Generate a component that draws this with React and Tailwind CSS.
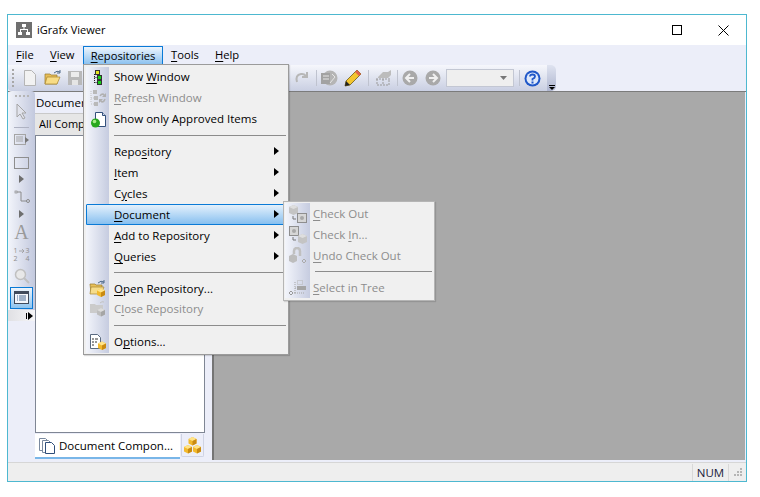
const ui = { fontFamily: '"Open Sans", "Noto Sans", sans-serif' };

const K = ({ children }) => <span className="underline underline-offset-2">{children}</span>;

const Caret = ({ className = '' }) => (
  <svg width="5" height="8" viewBox="0 0 5 8" className={className}><path d="M0 0l5 4-5 4z" fill="currentColor" /></svg>
);

const Cube = ({ x = 0, y = 0, c = '#f2b92c', d = '#c98a12', l = '#ffe48a' }) => (
  <g transform={`translate(${x} ${y})`}>
    <path d="M4 0l4 2v4.500l-4 2-4-2V2z" fill={c} />
    <path d="M4 0l4 2-4 2-4-2z" fill={l} />
    <path d="M8 2v4.500l-4 2V4z" fill={d} />
  </g>
);

const Icons = {
  show: (
    <svg width="16" height="16" viewBox="0 0 16 16">
      <rect x="5.500" y="1.500" width="4" height="4" fill="#e6e620" stroke="#333" strokeWidth="1" />
      <rect x="7.500" y="6.500" width="4" height="4" fill="#18d018" stroke="#333" strokeWidth="1" />
      <rect x="7.500" y="11.500" width="4" height="4" fill="#18d018" stroke="#333" strokeWidth="1" />
      <path d="M4.500 5v9M4.500 8.500h3M4.500 13.500h3" stroke="#222" strokeDasharray="1 1" fill="none" />
    </svg>
  ),
  refresh: (
    <svg width="18" height="16" viewBox="0 0 18 16">
      <g fill="#b9b9b9">
        <rect x="4" y="0" width="4" height="4" /><rect x="5" y="6" width="4" height="4" /><rect x="5" y="12" width="4" height="4" />
      </g>
      <path d="M2 1v12M2 8h3M2 14h3" stroke="#c2c2c2" strokeDasharray="1 1" fill="none" />
      <path d="M11 6q1-2 3-2l2 2M16 9q-1 3-3 3l-2-2" stroke="#b0b0b0" strokeWidth="1.500" fill="none" />
      <path d="M17 3v4h-4zM10 13V9h4z" fill="#b0b0b0" />
    </svg>
  ),
  approved: (
    <svg width="20" height="18" viewBox="0 0 20 18">
      <path d="M7.500 2.500h7l3 3v11h-10z" fill="#fff" stroke="#33507c" />
      <path d="M14.500 2.500v3h3" fill="#d5dcea" stroke="#33507c" />
      <circle cx="7.500" cy="13" r="4.500" fill="#27a81d" />
      <circle cx="6.500" cy="11.500" r="1.800" fill="#a6ee88" />
    </svg>
  ),
  open: (
    <svg width="18" height="18" viewBox="0 0 18 18">
      <path d="M1 4h5l1 1h6v8H2z" fill="#e8c05a" stroke="#99782a" strokeWidth=".7" />
      <path d="M2 7h13l-3 7H1z" fill="#f6dc8a" stroke="#a8852e" strokeWidth=".7" />
      <path d="M9 3q3-3 6-1M15 0v3h-3" stroke="#4e6a8a" fill="none" />
      <Cube x="8" y="8.500" />
    </svg>
  ),
  close: (
    <svg width="18" height="18" viewBox="0 0 18 18">
      <path d="M1 4h5l1 1h7v8H1z" fill="#cbcbcb" />
      <path d="M11 3q2-2 4-1" stroke="#c2c2c2" fill="none" />
      <Cube x="8" y="8" c="#bdbdbd" d="#a5a5a5" l="#dcdcdc" />
    </svg>
  ),
  options: (
    <svg width="18" height="18" viewBox="0 0 18 18">
      <path d="M1.500 1.500h7l3 3v11h-10z" fill="#fff" stroke="#5a6a80" />
      <path d="M3 6h2M3 9h2M3 12h2M6 6h3M6 9h2" stroke="#333" />
      <Cube x="9" y="8.500" />
    </svg>
  ),
  checkOut: (
    <svg width="18" height="18" viewBox="0 0 18 18">
      <path d="M0 2l4.500-2L9 2v6l-4.500 2L0 8z" fill="#c4c4c4" />
      <path d="M0 2l4.500-2L9 2 4.500 4z" fill="#dedede" />
      <rect x="8.500" y="8.500" width="9" height="9" fill="#d6d6d6" stroke="#8e8e8e" />
      <circle cx="13" cy="13" r="2" fill="#a8a8a8" />
      <path d="M4 11v3h3" stroke="#777" fill="none" />
    </svg>
  ),
  checkIn: (
    <svg width="18" height="18" viewBox="0 0 18 18">
      <rect x=".5" y=".5" width="9" height="9" fill="#d6d6d6" stroke="#8e8e8e" />
      <circle cx="5" cy="5" r="2" fill="#a8a8a8" />
      <path d="M9 10l4.500-2 4.500 2v6l-4.500 2L9 16z" fill="#c4c4c4" />
      <path d="M9 10l4.500-2 4.500 2-4.500 2z" fill="#dedede" />
      <path d="M4 11v3h3" stroke="#777" fill="none" />
    </svg>
  ),
  undo: (
    <svg width="18" height="18" viewBox="0 0 18 18">
      <path d="M0 9l4-2 4 2v5l-4 2-4-2z" fill="#bdbdbd" />
      <path d="M5 7V4q0-3 3-3t3 3v5" stroke="#c0c0c0" strokeWidth="2.500" fill="none" />
      <path d="M13 14l2-2 2 2-2 2z" fill="none" stroke="#aaa" />
    </svg>
  ),
  tree: (
    <svg width="18" height="18" viewBox="0 0 18 18">
      <rect x="8.500" y="1.500" width="5" height="4" fill="none" stroke="#b5b5b5" strokeDasharray="1 1" />
      <rect x="8" y="7" width="9" height="4" fill="#a5a5a5" />
      <path d="M6 3v11M6 14H3M6 9h2M6 14h9" stroke="#a5a5a5" strokeDasharray="1 1" />
      <path d="M0 14l2-2 2 2-2 2z" fill="none" stroke="#999" />
    </svg>
  ),
};

const menuRows = [
  { h: 20, icon: Icons.show, label: <>Show <K>W</K>indow</> },
  { h: 21, icon: Icons.refresh, off: true, label: <><K>R</K>efresh Window</> },
  { h: 22, icon: Icons.approved, label: 'Show only Approved Items' },
  { sep: true, h: 11 },
  { h: 21, sub: true, label: <>Repo<K>s</K>itory</> },
  { h: 21, sub: true, label: <><K>I</K>tem</> },
  { h: 21, sub: true, label: <>C<K>y</K>cles</> },
  { h: 21, sub: true, active: true, label: <><K>D</K>ocument</> },
  { h: 21, sub: true, label: <><K>A</K>dd to Repository</> },
  { h: 21, sub: true, label: <><K>Q</K>ueries</> },
  { sep: true, h: 11 },
  { h: 21, icon: Icons.open, label: <><K>O</K>pen Repository...</> },
  { h: 20, icon: Icons.close, off: true, label: <>C<K>l</K>ose Repository</> },
  { sep: true, h: 12 },
  { h: 22, icon: Icons.options, label: <>O<K>p</K>tions...</> },
];

const subRows = [
  { h: 21, icon: Icons.checkOut, label: <><K>C</K>heck Out</> },
  { h: 21, icon: Icons.checkIn, label: <>Check <K>I</K>n...</> },
  { h: 21, icon: Icons.undo, label: <><K>U</K>ndo Check Out</> },
  { sep: true, h: 11 },
  { h: 21, icon: Icons.tree, label: <><K>S</K>elect in Tree</> },
];

function MenuRow({ row, gutter, textLeft, off }) {
  if (row.sep) {
    return (
      <div className="flex items-center" style={{ height: row.h }}>
        <div className="bg-gradient-to-r from-[#f3f5fb] to-[#c6cce0] h-full shrink-0" style={{ width: gutter }} />
        <div className="h-px bg-[#8c8c8c] flex-1 ml-[5px] mr-[2px]" />
      </div>
    );
  }
  const dim = off || row.off;
  return (
    <div
      className={`relative flex items-center ${row.active ? 'bg-gradient-to-b from-[#e9f3fc] to-[#82bdee] outline outline-1 -outline-offset-1 outline-[#0a7ad6] rounded-[1px]' : ''}`}
      style={{ height: row.h }}
    >
      <div
        className={`h-full shrink-0 flex items-center justify-center ${row.active ? '' : 'bg-gradient-to-r from-[#f3f5fb] to-[#c6cce0]'}`}
        style={{ width: gutter }}
      >
        {row.icon}
      </div>
      <span className={`text-[11.5px] whitespace-nowrap ${dim ? 'text-[#8d8d8d]' : 'text-black'}`} style={{ marginLeft: textLeft }}>
        {row.label}
      </span>
      {row.sub && <Caret className="absolute right-[9px] top-[6px] text-black" />}
    </div>
  );
}

const ToolSep = ({ className = '' }) => <div className={`w-px h-[16px] bg-[#bfc3cf] ${className}`} />;

const Circle = ({ dir, className = '' }) => (
  <svg width="16" height="16" viewBox="0 0 16 16" className={className}>
    <circle cx="8" cy="8" r="7.500" fill="#a9a9a9" />
    <path d={dir === 'l' ? 'M8 4L4 8l4 4M4 8h8' : 'M8 4l4 4-4 4M12 8H4'} stroke="#f0f0f0" strokeWidth="2" fill="none" />
  </svg>
);

export default function App() {
  return (
    <div className="w-[760px] h-[497px] bg-white pt-[14px] pl-[7px] overflow-hidden" style={ui}>
      <div className="relative w-[740px] h-[468px] border border-[#4db8d0] flex flex-col bg-[#eceef9]">
        {/* title bar */}
        <div className="h-[30px] bg-white flex items-center shrink-0">
          <div className="ml-[8px] w-[16px] h-[16px] bg-[#6f6f6f] flex items-center justify-center">
            <svg width="12" height="12" viewBox="0 0 12 12" fill="#fff">
              <rect x="4" y="0" width="4" height="3" /><rect x="0" y="8" width="4" height="3" /><rect x="8" y="8" width="4" height="3" />
              <path d="M5.500 3h1v2H10v3H9V6H3v2H2V5h3.500z" />
            </svg>
          </div>
          <span className="ml-[5px] text-[11px] text-black">iGrafx Viewer</span>
          <div className="ml-auto flex items-center">
            <svg width="11" height="11" viewBox="0 0 11 11" className="mr-[35px]"><rect x=".5" y=".5" width="9" height="9" fill="none" stroke="#000" /></svg>
            <svg width="11" height="11" viewBox="0 0 11 11" className="mr-[17px]"><path d="M.5.500l10 10M10.500.500l-10 10" stroke="#000" /></svg>
          </div>
        </div>

        {/* menu bar */}
        <div className="h-[20px] shrink-0 flex items-center text-[11.2px] text-black pl-[8px]">
          <span className="w-[34px]"><K>F</K>ile</span>
          <span className="w-[33px]"><K>V</K>iew</span>
          <span className="h-[19px] mt-px w-[80px] flex items-center justify-center border border-[#0a7ad6] border-b-0 rounded-t-[1px] bg-gradient-to-b from-[#eef5fc] to-[#86bfee]"><K>R</K>epositories</span>
          <span className="ml-[8px] w-[44px]"><K>T</K>ools</span>
          <span><K>H</K>elp</span>
        </div>

        {/* main toolbar */}
        <div className="h-[27px] shrink-0 flex border-b border-[#7b7b7b]">
          <div className="w-[548px] h-[26px] rounded-r-[5px] rounded-bl-[4px] bg-gradient-to-b from-[#f6f7fc] to-[#c9cfe2] flex items-center pl-[4px]">
            <div className="w-[2px] h-[18px] border-l-2 border-dotted border-[#a7a7a7] mr-[9px]" />
            <svg width="14" height="16" viewBox="0 0 14 16"><path d="M1.500.500h7l4 4v11h-11z" fill="#f2f2f2" stroke="#b5b5b5" /></svg>
            <svg width="18" height="16" viewBox="0 0 18 16" className="ml-[7px]">
              <path d="M1 4h5l1 1h6v9H1z" fill="#e7bd58" stroke="#99782a" strokeWidth=".7" />
              <path d="M3 7h13l-3 7H1z" fill="#f8dc85" stroke="#a8852e" strokeWidth=".7" />
              <path d="M10 3q3-3 6-1M16 0v3h-3" stroke="#4e6a8a" fill="none" />
            </svg>
            <svg width="14" height="14" viewBox="0 0 14 14" className="ml-[6px]"><rect width="14" height="14" fill="#b9b9b9" /><rect x="3" y="1" width="8" height="5" fill="#ececec" /><rect x="4" y="9" width="6" height="5" fill="#e5e5e5" /></svg>
            <svg width="16" height="16" viewBox="0 0 16 16" className="ml-[212px]"><path d="M3 12q-2-7 4-8 3-.5 5 2M13 2v5H8" stroke="#b7b7b7" strokeWidth="2" fill="none" /></svg>
            <ToolSep className="ml-[6px]" />
            <svg width="17" height="17" viewBox="0 0 17 17" className="ml-[4px]"><circle cx="9" cy="8" r="7.500" fill="#b5b5b5" /><rect x="0" y="3" width="9" height="11" fill="#a2a2a2" /><path d="M2 6h6M2 9h6M11 4l3 3-5 6" stroke="#e6e6e6" fill="none" /></svg>
            <svg width="18" height="18" viewBox="0 0 18 18" className="ml-[6px]">
              <path d="M13 1l4 4L6 16l-5 1 1-5z" fill="#f3c52e" stroke="#6b5a1a" strokeWidth=".8" />
              <path d="M13 1l4 4-2 2-4-4z" fill="#e0604a" />
              <path d="M1 17l1-5 4 4z" fill="#222" />
            </svg>
            <ToolSep className="ml-[6px]" />
            <svg width="16" height="16" viewBox="0 0 16 16" className="ml-[6px]"><path d="M3 7l5-5h5l3-2v5l-3 3H3z" fill="#bcbcbc" /><path d="M2 9v6h12V9M8 9v6M1 9h14" stroke="#999" strokeDasharray="2 1" fill="none" /></svg>
            <ToolSep className="ml-[6px]" />
            <Circle dir="l" className="ml-[4px]" />
            <Circle dir="r" className="ml-[7px]" />
            <div className="ml-[5px] w-[68px] h-[18px] border border-[#c3c7d3] bg-[#efefef] flex items-center justify-end pr-[6px]">
              <svg width="7" height="4" viewBox="0 0 7 4"><path d="M0 0h7L3.500 4z" fill="#777" /></svg>
            </div>
            <ToolSep className="ml-[5px]" />
            <svg width="17" height="17" viewBox="0 0 17 17" className="ml-[4px]">
              <circle cx="8.500" cy="8.500" r="8" fill="#1f57c8" />
              <circle cx="8.500" cy="8.500" r="6" fill="#dfe9fa" />
              <path d="M6 6.500q0-2 2.500-2t2.500 2q0 1.500-2.500 2.500v1.500" stroke="#1f57c8" strokeWidth="1.800" fill="none" />
              <rect x="7.500" y="11.500" width="2" height="2" fill="#1f57c8" />
            </svg>
            <div className="ml-auto w-[9px] h-[26px] rounded-r-[5px] bg-gradient-to-b from-[#dfe3f0] to-[#aeb5cf] flex flex-col items-center justify-end pb-[1px]">
              <div className="w-[6px] h-px bg-black mb-px" />
              <svg width="6" height="3" viewBox="0 0 6 3"><path d="M0 0h6L3 3z" /></svg>
            </div>
          </div>
        </div>

        {/* body */}
        <div className="flex-1 flex min-h-0">
          {/* drawing tools */}
          <div className="w-[27px] h-[230px] -mt-[1px] shrink-0 rounded-t-[4px] bg-gradient-to-r from-[#f3f5fb] to-[#c3c9de] flex flex-col items-center text-[#a9a9a9]">
            <div className="w-[14px] border-t-2 border-dotted border-[#b5b5b5] mt-[4px]" />
            <svg width="12" height="17" viewBox="0 0 12 17" className="mt-[6px]"><path d="M1 1v13l3-3 3 5 2-1-3-5h4z" fill="#e1e3ec" stroke="#a5a5a5" /></svg>
            <div className="w-[15px] h-px bg-[#aeb2c2] mt-[7px]" />
            <svg width="15" height="12" viewBox="0 0 15 12" className="mt-[6px]"><rect x=".5" y=".5" width="11" height="10" fill="none" stroke="#a5a5a5" /><path d="M2 3h7M2 5h7M2 7h7" stroke="#a5a5a5" /><path d="M11 3l4 3-4 3z" fill="#777" /></svg>
            <svg width="15" height="12" viewBox="0 0 15 12" className="mt-[11px]"><rect x=".5" y=".5" width="14" height="11" fill="none" stroke="#8e8e8e" /></svg>
            <Caret className="mt-[6px] text-[#6e6e6e]" />
            <svg width="16" height="13" viewBox="0 0 16 13" className="mt-[7px]"><path d="M3 2h4v9h6" fill="none" stroke="#8a8a8a" /><rect x="1" y="1" width="2" height="2" fill="none" stroke="#8a8a8a" strokeWidth=".7" /><circle cx="14" cy="11" r="1.500" fill="none" stroke="#8a8a8a" /></svg>
            <Caret className="mt-[7px] text-[#6e6e6e]" />
            <span className="mt-[3px] text-[20px] leading-[22px] text-[#9a9a9a]" style={{ fontFamily: '"Liberation Serif", serif' }}>A</span>
            <span className="mt-[4px] w-[18px] grid grid-cols-[6px_6px_6px] text-[7px] leading-[8px] text-[#8f8f8f] text-center">
              <span>1</span>
              <svg width="6" height="8" viewBox="0 0 6 8"><path d="M0 4h5M3 2l2 2-2 2" stroke="#9a9a9a" fill="none" strokeWidth=".8" /></svg>
              <span>3</span>
              <span>2</span>
              <span />
              <span>4</span>
            </span>
            <svg width="16" height="16" viewBox="0 0 16 16" className="mt-[5px]"><circle cx="6.500" cy="6.500" r="5" fill="#e8e8e8" stroke="#c0c0c0" strokeWidth="1.500" /><path d="M10 10l5 5" stroke="#c0c0c0" strokeWidth="2" /></svg>
            <div className="mt-[3px] w-[23px] h-[22px] border border-[#0a7ad6] bg-gradient-to-b from-[#eef5fc] to-[#8ec4ef] flex items-center justify-center">
              <svg width="15" height="15" viewBox="0 0 15 15"><rect x=".5" y=".5" width="14" height="12" fill="#f4f6fb" stroke="#3f4a5c" /><rect x="1" y="1" width="13" height="2" fill="#3f4a5c" /><path d="M3 5h1M3 7h1M3 9h1M5 5h7M5 7h7M5 9h7" stroke="#4a6d96" /></svg>
            </div>
            <div className="mt-auto w-full h-[11px] bg-gradient-to-r from-[#e0e0e4] to-[#f6f6f8] flex items-center justify-end pr-[2px]">
              <div className="w-px h-[6px] bg-black mr-px" /><Caret className="text-black" />
            </div>
          </div>

          {/* document panel */}
          <div className="w-[170px] shrink-0 flex flex-col pb-[3px]">
            <div className="h-[21px] w-[48px] flex items-center text-[11.5px] text-black pl-px overflow-hidden whitespace-nowrap shrink-0">Document Components</div>
            <div className="h-[22px] bg-[#e6e6e6] border-t border-[#c9c9c9] shrink-0 pl-[4px]">
              <div className="w-[44px] h-full flex items-center text-[11px] text-black whitespace-nowrap overflow-hidden">All Components</div>
            </div>
            <div className="flex-1 bg-white border border-[#7f8694]" />
            <div className="h-[25px] mt-px flex shrink-0">
              <div className="w-[145px] h-[25px] bg-white border-b-2 border-[#79b6e8] flex items-center">
                <svg width="17" height="17" viewBox="0 0 17 17" className="ml-[4px]"><path d="M.5 1.500h6l3 3v9h-9z" fill="#fff" stroke="#7a8aa0" /><path d="M3.500 3.500h6l3 3v9h-9z" fill="#fff" stroke="#7a8aa0" /><path d="M6.500 5.500h6l3 3v8h-9z" fill="#fff" stroke="#2f4e7a" /></svg>
                <span className="ml-[3px] text-[11.5px] text-black whitespace-nowrap">Document Compon...</span>
              </div>
              <div className="ml-px w-[23px] h-[23px] border border-t-0 border-[#cfd3e3] rounded-b-[2px] flex items-center justify-center">
                <svg width="17" height="17" viewBox="0 0 17 17"><Cube x="4.500" y="0" /><Cube x="0" y="8" /><Cube x="9" y="8" /></svg>
              </div>
            </div>
          </div>

          {/* workspace */}
          <div className="flex-1 ml-[7px] mr-px border-l-2 border-[#757575] bg-[#a9a9a9] mb-[2px]" />
        </div>

        {/* status bar */}
        <div className="h-[19px] shrink-0 bg-[#eeeeee] border-t border-[#d6d6d6] flex items-center justify-end">
          <div className="w-[37px] h-[17px] border-x border-[#d8d8d8] text-[11.5px] leading-[17px] text-center text-[#1a1a3a]">NUM</div>
          <svg width="16" height="12" viewBox="0 0 16 12" className="mr-[1px]" fill="#b5b5b5">
            <rect x="11" y="2" width="2" height="2" /><rect x="8" y="5" width="2" height="2" /><rect x="11" y="5" width="2" height="2" />
            <rect x="5" y="8" width="2" height="2" /><rect x="8" y="8" width="2" height="2" /><rect x="11" y="8" width="2" height="2" />
          </svg>
        </div>

        {/* open menu */}
        <div className="absolute left-[75px] top-[49px] w-[206px] bg-[#f0f0f0] border border-[#9b9b9b] pl-[2px] pt-[2px] pb-[1px] shadow-[1px_1px_1px_rgba(0,0,0,0.15)]">
          {menuRows.map((row, i) => (
            <MenuRow key={i} row={row} gutter={23} textLeft={5} />
          ))}
        </div>

        {/* submenu */}
        <div className="absolute left-[275px] top-[186px] w-[152px] bg-[#f0f0f0] border border-[#b5b5b5] pl-[1px] pt-[1px] pb-[2px] shadow-[1px_1px_1px_rgba(0,0,0,0.12)]">
          {subRows.map((row, i) => (
            <MenuRow key={i} row={row} gutter={25} textLeft={3} off />
          ))}
        </div>
      </div>
    </div>
  );
}
